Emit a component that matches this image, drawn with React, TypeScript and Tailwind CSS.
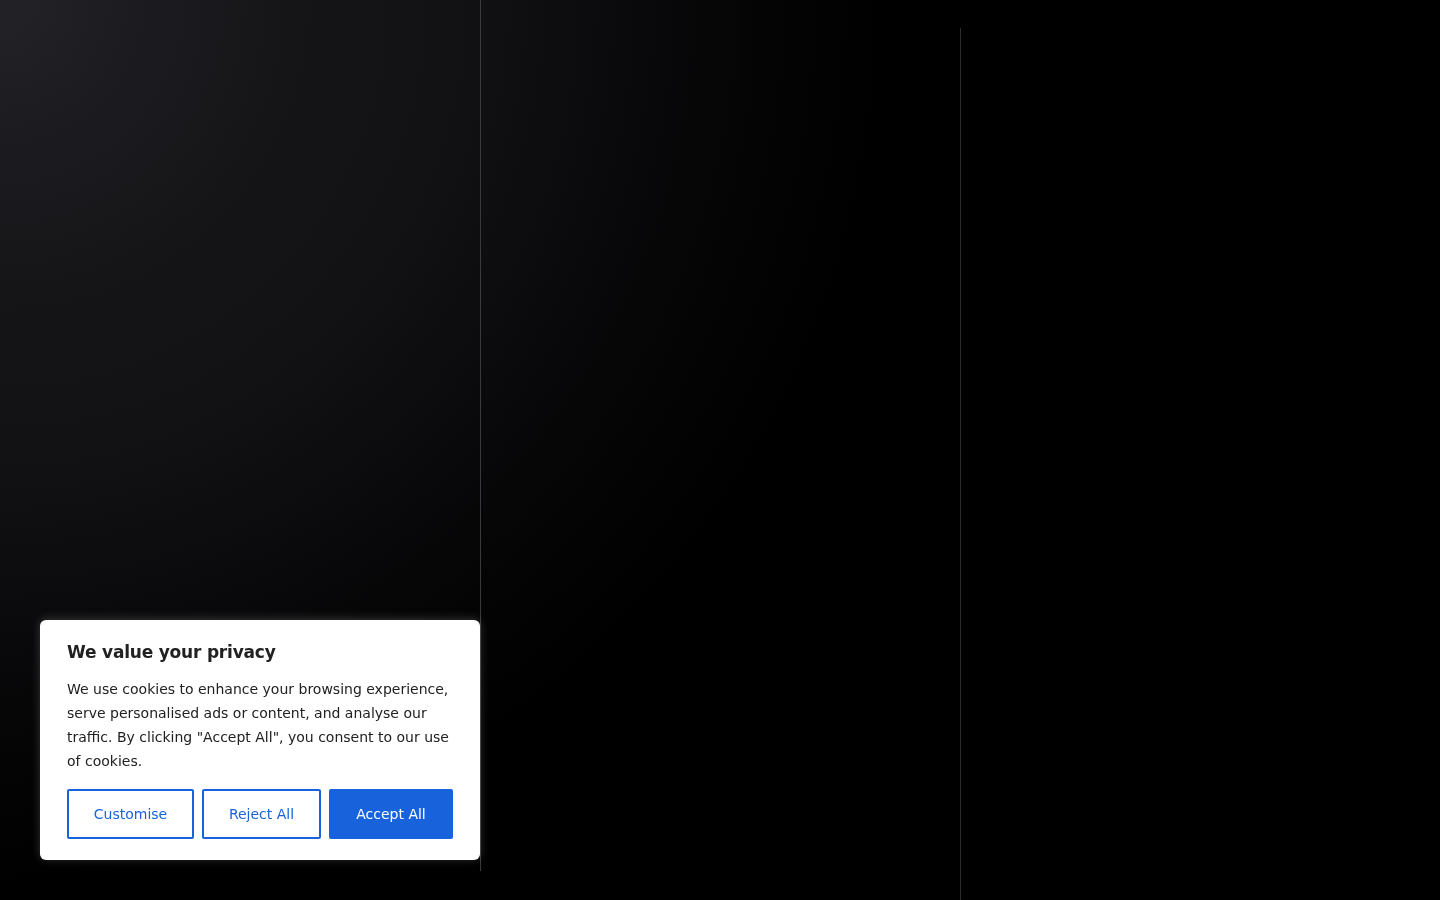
import React from 'react'

const font = { fontFamily: '"DejaVu Sans", "Noto Sans", sans-serif' }

function CookieBanner() {
  return (
    <div
      className="fixed bottom-[40px] left-[40px] w-[440px] rounded-md bg-white px-[27px] pt-[21px] pb-[21px] shadow-[0_-1px_10px_0_rgba(172,171,171,0.3)]"
      style={font}
    >
      <p className="text-[17px] font-bold leading-[22px] tracking-[-0.2px] text-[#212121]">
        We value your privacy
      </p>
      <p className="mt-[14px] text-[14px] leading-[24px] text-[#212121]">
        We use cookies to enhance your browsing experience, serve personalised ads or content, and
        analyse our traffic. By clicking "Accept All", you consent to our use of cookies.
      </p>
      <div className="mt-[16px] flex gap-[8px]">
        <button className="h-[50px] w-[127px] rounded-[2px] border-2 border-[#1863dc] bg-transparent text-[14px] font-medium text-[#1863dc]">
          Customise
        </button>
        <button className="h-[50px] w-[119px] rounded-[2px] border-2 border-[#1863dc] bg-transparent text-[14px] font-medium text-[#1863dc]">
          Reject All
        </button>
        <button className="h-[50px] w-[124px] rounded-[2px] border-2 border-[#1863dc] bg-[#1863dc] text-[14px] font-medium text-white">
          Accept All
        </button>
      </div>
    </div>
  )
}

export default function App() {
  return (
    <div className="relative h-[900px] w-[1440px] overflow-hidden bg-[radial-gradient(circle_at_0%_0%,#222227_0px,#151518_300px,#111114_480px,#0a0a0c_620px,#040405_760px,#000000_900px)]">
      <div className="grid h-full grid-cols-3">
        <div />
        <div className="flex">
          <div className="h-[871px] w-px bg-[#3a3a3d]" />
        </div>
        <div className="flex flex-col pt-[28px]">
          <div className="h-full w-px bg-[#2c2c2e]" />
        </div>
      </div>
      <CookieBanner />
    </div>
  )
}
